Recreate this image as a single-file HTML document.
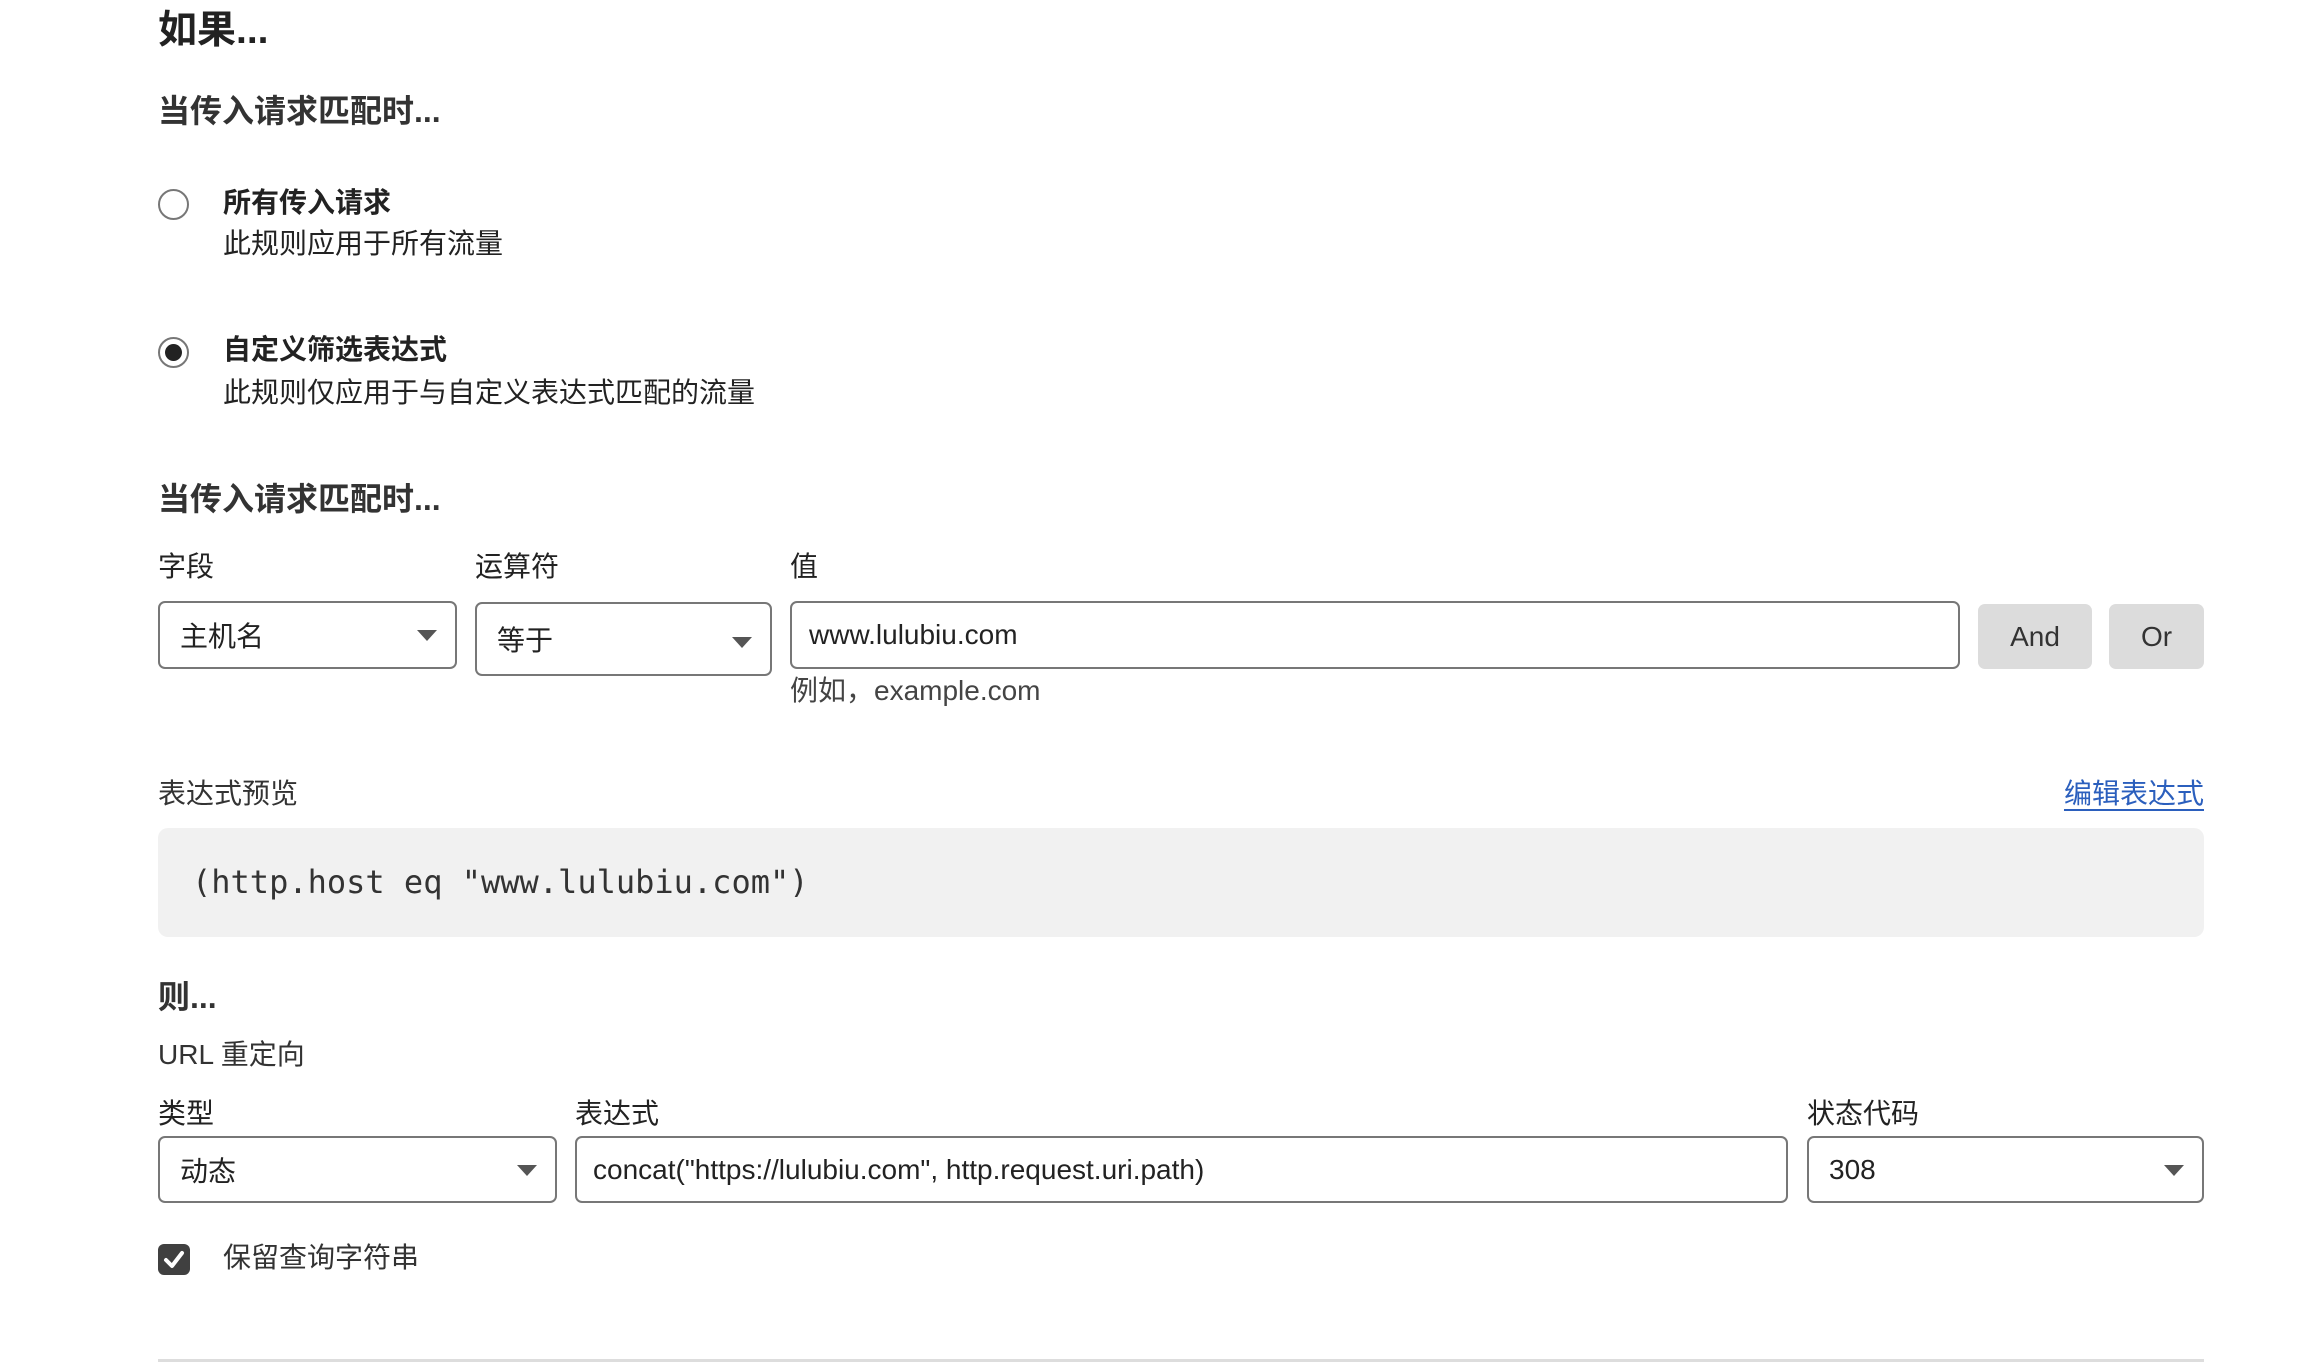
<!DOCTYPE html>
<html><head><meta charset="utf-8"><style>
*{margin:0;padding:0;box-sizing:border-box}
body{width:2312px;height:1364px;background:#fff;position:relative;overflow:hidden;font-family:"Liberation Sans","Noto Sans CJK SC",sans-serif;color:#222}
.a{position:absolute;white-space:nowrap;line-height:1}
.h1{font-size:39px;font-weight:700}
.h2{font-size:32px;font-weight:700;color:#333}
.t{font-size:28px}
.b{font-weight:700}
.box{position:absolute;border:2px solid #777;border-radius:7px;background:#fff;font-size:28px;display:flex;align-items:center;padding-left:20px;color:#222}
.arr{position:absolute;right:18px;top:50%;margin-top:-5px;width:0;height:0;border-left:10px solid transparent;border-right:10px solid transparent;border-top:11px solid #555}
.btn{position:absolute;background:#dcdcdc;border-radius:7px;font-size:28px;display:flex;align-items:center;justify-content:center;color:#333}
.radio{position:absolute;width:31px;height:31px;border:2px solid #777;border-radius:50%}
</style></head><body>
<div class="a h1" style="left:158px;top:11px">如果...</div>
<div class="a h2" style="left:158px;top:95px">当传入请求匹配时...</div>

<div class="radio" style="left:158px;top:189px"></div>
<div class="a t b" style="left:223px;top:189px">所有传入请求</div>
<div class="a t" style="left:223px;top:230px">此规则应用于所有流量</div>

<div class="radio" style="left:158px;top:337px"><div style="position:absolute;left:5px;top:5px;width:17px;height:17px;border-radius:50%;background:#222"></div></div>
<div class="a t b" style="left:223px;top:336px">自定义筛选表达式</div>
<div class="a t" style="left:223px;top:379px">此规则仅应用于与自定义表达式匹配的流量</div>

<div class="a h2" style="left:158px;top:483px">当传入请求匹配时...</div>

<div class="a t" style="left:158px;top:553px">字段</div>
<div class="a t" style="left:475px;top:553px">运算符</div>
<div class="a t" style="left:790px;top:553px">值</div>

<div class="box" style="left:158px;top:601px;width:299px;height:68px">主机名<div class="arr"></div></div>
<div class="box" style="left:475px;top:602px;width:297px;height:74px">等于<div class="arr" style="margin-top:-2px"></div></div>
<div class="box" style="left:790px;top:601px;width:1170px;height:68px;padding-left:17px">www.lulubiu.com</div>
<div class="btn" style="left:1978px;top:604px;width:114px;height:65px">And</div>
<div class="btn" style="left:2109px;top:604px;width:95px;height:65px">Or</div>
<div class="a t" style="left:790px;top:677px;color:#444">例如，example.com</div>

<div class="a t" style="left:158px;top:780px;color:#333">表达式预览</div>
<div class="a t" style="right:108px;top:780px;color:#2b5fbd;text-decoration:underline;text-underline-offset:6px">编辑表达式</div>
<div style="position:absolute;left:158px;top:828px;width:2046px;height:109px;background:#f1f1f1;border-radius:10px"></div>
<div class="a" style="left:192px;top:866px;font-family:'DejaVu Sans Mono','Liberation Mono',monospace;font-size:32px;color:#333">(http.host eq "www.lulubiu.com")</div>

<div class="a h2" style="left:158px;top:981px">则...</div>
<div class="a t" style="left:158px;top:1041px;color:#333">URL 重定向</div>

<div class="a t" style="left:158px;top:1100px">类型</div>
<div class="a t" style="left:575px;top:1100px">表达式</div>
<div class="a t" style="left:1807px;top:1100px">状态代码</div>

<div class="box" style="left:158px;top:1136px;width:399px;height:67px">动态<div class="arr"></div></div>
<div class="box" style="left:575px;top:1136px;width:1213px;height:67px;padding-left:16px">concat("https://lulubiu.com", http.request.uri.path)</div>
<div class="box" style="left:1807px;top:1136px;width:397px;height:67px">308<div class="arr"></div></div>

<div style="position:absolute;left:158px;top:1244px;width:32px;height:31px;background:#404040;border-radius:6px">
<svg width="32" height="31" viewBox="0 0 32 31"><path d="M8 16 L14 22 L24 9" stroke="#fff" stroke-width="4" fill="none" stroke-linecap="round" stroke-linejoin="round"/></svg></div>
<div class="a t" style="left:223px;top:1244px;color:#333">保留查询字符串</div>

<div style="position:absolute;left:158px;top:1359px;width:2046px;height:3px;background:#ddd"></div>
</body></html>
